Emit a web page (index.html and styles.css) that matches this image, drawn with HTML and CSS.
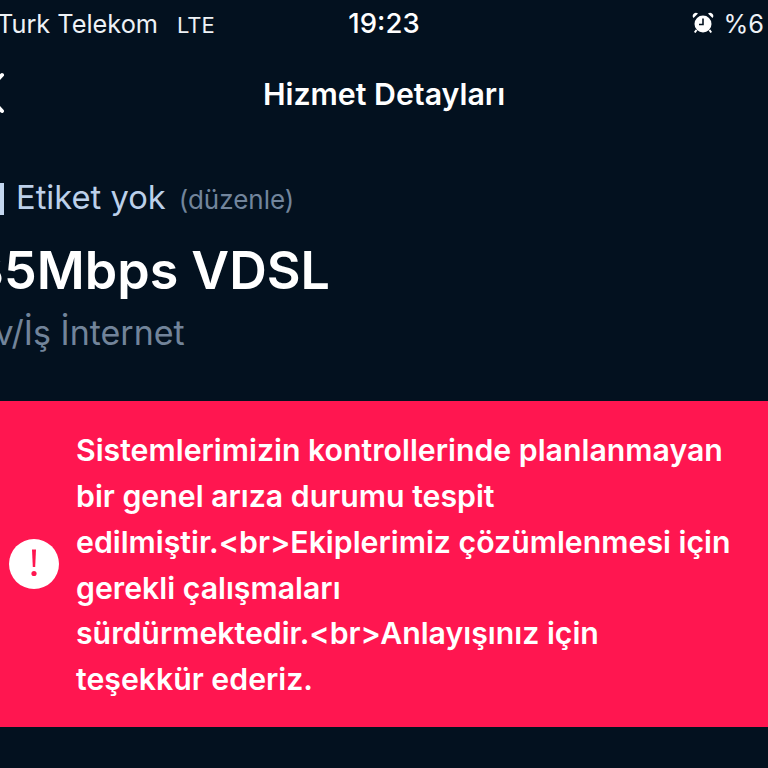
FILE: index.html
```html
<!DOCTYPE html>
<html lang="tr">
<head>
    <meta charset="UTF-8">
    <title>Hizmet Detayları</title>
    <meta name="viewport" content="width=device-width, initial-scale=1.0">
    <link rel="stylesheet" href="styles.css">
</head>
<body>

<!-- Durum çubuğu -->
<div class="statusBar">
    <div class="statusSol">
        <span>Turk Telekom</span>
        <span class="lte">LTE</span>
    </div>
    <div class="saat">19:23</div>
    <div class="statusSag">
        <svg class="alarm" width="22" height="22" viewBox="0 0 22 22">
            <circle cx="11" cy="12" r="8.5" fill="#fff"/>
            <path d="M1.5 6 L6 1.5 A3.2 3.2 0 0 0 1.5 6 Z M20.5 6 L16 1.5 A3.2 3.2 0 0 1 20.5 6 Z" fill="#fff"/>
            <path d="M4.5 18 L2.8 20.5 M17.5 18 L19.2 20.5" stroke="#fff" stroke-width="2"/>
            <path d="M11 6.5 V12.5 H7" stroke="#03111f" stroke-width="1.6" fill="none"/>
        </svg>
        <span>%6</span>
    </div>
</div>

<!-- Başlık -->
<div class="baslik">
    <svg class="geri" width="8" height="44" viewBox="0 0 8 44">
        <path d="M2 3 L-15 21 L2 39" stroke="#fff" stroke-width="4" stroke-linecap="round" fill="none"/>
    </svg>
    <h1>Hizmet Detayları</h1>
</div>

<!-- Hizmet bilgisi -->
<div class="hizmet">
    <div class="etiket">
        <span class="etiketIkon"></span>
        <span class="etiketYazi">Etiket yok</span>
        <span class="duzenle">(düzenle)</span>
    </div>
    <div class="paket">35Mbps VDSL</div>
    <div class="tur">Ev/İş İnternet</div>
</div>

<!-- Arıza uyarısı -->
<div class="uyari">
    <svg class="uyariIkon" width="50" height="50" viewBox="0 0 50 50">
        <circle cx="25" cy="25" r="25" fill="#fff"/>
        <path d="M23 10.5 H27 L26.2 28 H23.8 Z" fill="#ff1650"/>
        <circle cx="25" cy="34.5" r="2.6" fill="#ff1650"/>
    </svg>
    <p>Sistemlerimizin kontrollerinde planlanmayan bir genel arıza durumu tespit <span class="kirilmaz">edilmiştir.&lt;br&gt;Ekiplerimiz</span> çözümlenmesi için gerekli çalışmaları <span class="kirilmaz">sürdürmektedir.&lt;br&gt;Anlayışınız</span> için teşekkür ederiz.</p>
</div>

</body>
</html>
```

FILE: styles.css
```css
html, body {
    height: 100%;
}
body {
    font-family: Inter, "Liberation Sans", sans-serif;
    background-color: #03111f;
    color: #fff;
    margin: 0;
    overflow: hidden;
}
.statusBar {
    display: grid;
    grid-template-columns: 1fr auto 1fr;
    align-items: center;
    height: 46px;
    font-size: 25.3px;
    color: #eef2f6;
}
.statusSol {
    display: flex;
    align-items: baseline;
    gap: 19px;
    margin-left: -3px;
}
.lte {
    font-size: 22px;
}
.saat {
    font-size: 27.5px;
    font-weight: 500;
    color: #fff;
}
.statusSag {
    display: flex;
    justify-content: flex-end;
    align-items: center;
    gap: 9px;
    padding-right: 4px;
}
.baslik {
    display: flex;
    align-items: center;
    justify-content: center;
    height: 50px;
    margin-top: 23px;
    position: relative;
}
.baslik h1 {
    margin: 0;
    font-size: 30.3px;
    font-weight: 600;
}
.geri {
    position: absolute;
    left: 0;
    top: 3px;
}
.hizmet {
    margin-top: 58px;
    margin-left: -26px;
}
.etiket {
    display: flex;
    align-items: baseline;
    gap: 12px;
    height: 44px;
    margin-bottom: 2px;
}
.etiketIkon {
    width: 4px;
    height: 32px;
    margin-left: 26px;
    background: #c4d7ef;
    align-self: center;
}
.etiketYazi {
    font-size: 32.7px;
    color: #bcd0ea;
}
.duzenle {
    font-size: 26px;
    color: #72859c;
    margin-left: 1px;
}
.paket {
    font-size: 52px;
    font-weight: 600;
    line-height: 62px;
    margin-top: 19px;
    margin-left: -3px;
}
.tur {
    font-size: 34px;
    color: #72849a;
    line-height: 42px;
    margin-top: 10px;
}
.uyari {
    display: flex;
    align-items: center;
    background: #ff1650;
    height: 326px;
    margin-top: 47px;
    padding-left: 9px;
    gap: 17px;
}
.uyariIkon {
    flex-shrink: 0;
}
.uyari p {
    margin: 0;
    padding-top: 3px;
    width: 656px;
    font-size: 30.25px;
    font-weight: 600;
    line-height: 45.8px;
}
.kirilmaz {
    white-space: nowrap;
}
```
